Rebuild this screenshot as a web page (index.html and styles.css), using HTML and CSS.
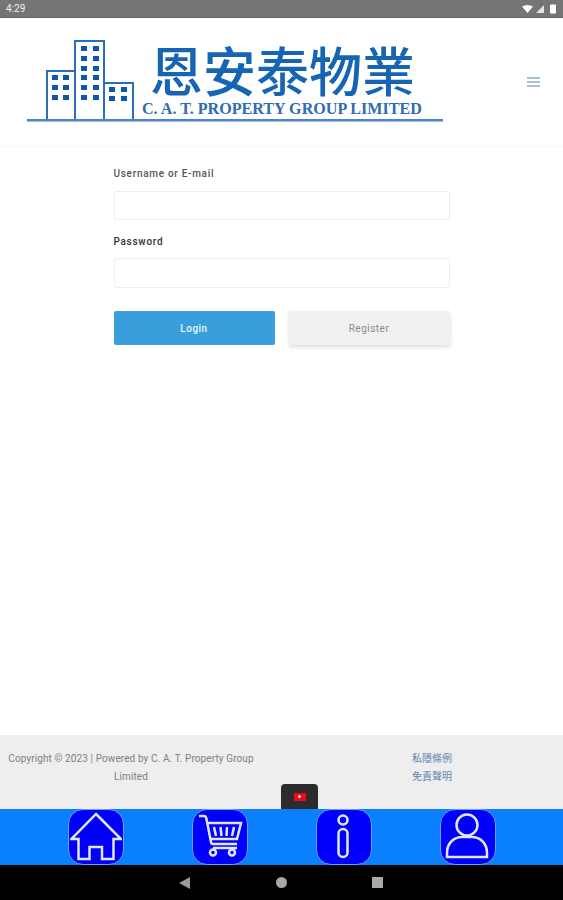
FILE: index.html
```html
<!DOCTYPE html>
<html lang="zh-Hant">
<head>
<meta charset="utf-8">
<title>C. A. T. Property Group</title>
<link rel="stylesheet" href="styles.css">
</head>
<body>
<div class="page">
  <div class="status">
    <span class="time">4:29</span>
    <svg class="status-icons" width="36" height="10" viewBox="0 0 36 10">
      <path d="M0 2.500 Q5.500 -0.500 11 2.500 L5.500 9 Z" fill="#fff"/>
      <path d="M22 1 V9 H14 Z" fill="#e4e4e4"/>
      <rect x="28" y="0.500" width="6" height="9" rx="1" fill="#fff"/>
    </svg>
  </div>
  <header class="header">
    <svg class="logo" width="450" height="128" viewBox="0 18 450 128">
      <g fill="none" stroke="#2a6fb8" stroke-width="2">
        <rect x="47" y="71" width="28" height="49"/>
        <rect x="75" y="41" width="29" height="79"/>
        <rect x="104" y="83" width="29" height="37"/>
      </g>
      <g fill="#0f56a6">
        <rect x="52" y="75" width="6" height="5"/><rect x="63" y="75" width="6" height="5"/>
        <rect x="52" y="85" width="6" height="5"/><rect x="63" y="85" width="6" height="5"/>
        <rect x="52" y="95" width="6" height="5"/><rect x="63" y="95" width="6" height="5"/>
        <rect x="81" y="46" width="6" height="5"/><rect x="93" y="46" width="6" height="5"/>
        <rect x="81" y="56" width="6" height="5"/><rect x="93" y="56" width="6" height="5"/>
        <rect x="81" y="66" width="6" height="5"/><rect x="93" y="66" width="6" height="5"/>
        <rect x="81" y="75" width="6" height="5"/><rect x="93" y="75" width="6" height="5"/>
        <rect x="81" y="85" width="6" height="5"/><rect x="93" y="85" width="6" height="5"/>
        <rect x="81" y="95" width="6" height="5"/><rect x="93" y="95" width="6" height="5"/>
        <rect x="109" y="87" width="6" height="5"/><rect x="121" y="87" width="6" height="5"/>
        <rect x="109" y="96" width="6" height="5"/><rect x="121" y="96" width="6" height="5"/>
      </g>
      <rect x="27" y="119" width="416" height="2.500" fill="#4f83c4"/>
      <text class="logo-cjk" x="150" y="92">恩安泰物業</text>
      <text class="logo-en" x="142" y="114">C. A. T. PROPERTY GROUP LIMITED</text>
    </svg>
    <button class="menu" aria-label="Menu"><span></span><span></span><span></span></button>
  </header>
  <main class="main">
    <form class="form">
      <label class="label label-user">Username or E-mail</label>
      <input class="input" type="text">
      <label class="label label-pass">Password</label>
      <input class="input input-pass" type="password">
      <div class="actions">
        <button class="btn btn-login" type="button">Login</button>
        <button class="btn btn-register" type="button">Register</button>
      </div>
    </form>
  </main>
  <footer class="footer">
    <p class="copy">Copyright © 2023 | Powered by C. A. T. Property Group Limited</p>
    <div class="links">
      <a>私隱條例</a>
      <a>免責聲明</a>
    </div>
    <div class="lang"><span class="flag"><i></i></span></div>
  </footer>
  <nav class="tabs">
    <a class="tab">
      <svg width="52" height="52" viewBox="0 0 52 52"><path d="M26 3 L51 28 H43.500 V48 H32 V36 H19.500 V48 H8.500 V28 H1.500 Z"/></svg>
    </a>
    <a class="tab">
      <svg width="52" height="52" viewBox="0 0 52 52">
        <path d="M5 5 H10 C11.500 5 12 6 12.300 7 L17 31 C17.300 32.500 18 33 19 33 H43"/>
        <path d="M14 12 H47 L43 28 H16.500"/>
        <path d="M20 16 L22 25 M26.500 16 L27.500 25 M33 16 L32.500 25 M40 16 L38 25"/>
        <path d="M19 37 H43"/>
        <circle cx="19" cy="41.500" r="3"/><circle cx="38" cy="41.500" r="3"/>
      </svg>
    </a>
    <a class="tab">
      <svg width="52" height="52" viewBox="0 0 52 52">
        <circle cx="25" cy="9" r="4.500"/>
        <rect x="20.500" y="18" width="9" height="28" rx="4.500"/>
      </svg>
    </a>
    <a class="tab">
      <svg width="52" height="52" viewBox="0 0 52 52">
        <circle cx="25" cy="14" r="10.500"/>
        <path d="M5 46 V42 C5 32 12 26 20 26 H30 C38 26 45 32 45 42 V46 Z"/>
      </svg>
    </a>
  </nav>
  <div class="sysnav">
    <span class="back"></span>
    <span class="home"></span>
    <span class="recent"></span>
  </div>
</div>
</body>
</html>
```

FILE: styles.css
```css
* { box-sizing: border-box; }
html, body { margin: 0; padding: 0; }
body { font-family: Roboto, "Noto Sans CJK TC", sans-serif; background: #fff; }
.page { display: flex; flex-direction: column; height: 900px; width: 563px; overflow: hidden; }

.status {
  flex: 0 0 18px;
  background: #757575;
  border-bottom: 1px solid #666;
  display: flex;
  justify-content: space-between;
  align-items: center;
  padding: 0 8px 0 6px;
}
.time { color: #f2f2f2; font-size: 10px; }
.status-icons { display: block; margin-right: -3px; }

.header {
  flex: 0 0 129px;
  display: flex;
  justify-content: space-between;
  align-items: flex-start;
  padding-right: 23px;
  border-bottom: 1px solid #f6f6f6;
}
.logo { display: block; }
.logo-cjk { font-family: "Noto Sans CJK TC", sans-serif; font-size: 53px; font-weight: 500; fill: #1565b4; }
.logo-en { font-family: "Liberation Serif", serif; font-size: 16.100px; font-weight: 700; fill: #2f6cb0; }
.menu {
  display: flex;
  flex-direction: column;
  gap: 2px;
  width: 13px;
  margin-top: 59px;
  padding: 0;
  border: 0;
  background: none;
}
.menu span { display: block; height: 2px; background: #a8bfdc; }

.main { flex: 1; padding-top: 20px; }
.form { width: 336px; margin: 0 auto; display: flex; flex-direction: column; }
.label { font-size: 10px; line-height: 14px; font-weight: 500; letter-spacing: .7px; }
.label-user { color: #555; margin-bottom: 10px; }
.label-pass { color: #333; margin-top: 15px; margin-bottom: 9px; }
.input {
  display: block;
  width: 100%;
  height: 29px;
  padding: 0 8px;
  background: #fff;
  border: 1px solid #eeeeee;
  border-radius: 2px;
  outline: 0;
}
.input-pass { height: 30px; }
.actions { display: flex; justify-content: space-between; margin-top: 23px; }
.btn {
  width: 161px;
  height: 34px;
  padding: 0;
  border: 0;
  border-radius: 2px;
  font-family: inherit;
  font-size: 10px;
  letter-spacing: .5px;
}
.btn-login { background: #379fdb; color: #eaf5fb; font-weight: 500; }
.btn-register { background: #f0f0f0; color: #8a8a8a; box-shadow: 0 2px 4px rgba(0, 0, 0, .14); }

.footer {
  position: relative;
  flex: 0 0 74px;
  display: flex;
  align-items: flex-start;
  padding-top: 14px;
  background: #eeeeee;
}
.copy {
  flex: 0 0 262px;
  margin: 1px 0 0;
  padding: 0 6px;
  color: #808080;
  font-size: 10px;
  line-height: 18px;
  letter-spacing: .1px;
  text-align: center;
}
.links { display: flex; flex-direction: column; margin-left: 150px; }
.links a { color: #5f86ad; font-size: 10px; line-height: 18px; font-family: "Noto Sans CJK TC", sans-serif; }
.lang {
  position: absolute;
  left: 281px;
  bottom: 0;
  width: 37px;
  height: 25px;
  background: #2c2c2c;
  border-radius: 4px 4px 0 0;
  display: flex;
  align-items: center;
  justify-content: center;
}
.flag {
  width: 12px;
  height: 8px;
  background: #f0071a;
  display: flex;
  align-items: center;
  justify-content: center;
}
.flag i { display: block; width: 3px; height: 3px; border-radius: 50%; background: #ffd5d5; }

.tabs { flex: 0 0 56px; background: #0a80ff; position: relative; display: flex; padding-left: 68px; gap: 68px; }
.tab {
  flex: 0 0 56px;
  height: 56px;
  background: #0000fb;
  border: 1px solid #5aa5ff;
  border-radius: 15px;
  display: flex;
  align-items: center;
  justify-content: center;
}
.tab svg { fill: none; stroke: #e3e6ff; stroke-width: 2.500; display: block; }

.sysnav {
  flex: 0 0 35px;
  background: #000;
  display: flex;
  align-items: center;
  padding-left: 179px;
}
.back {
  width: 0;
  height: 0;
  border-top: 6px solid transparent;
  border-bottom: 6px solid transparent;
  border-right: 11px solid #9a9a9a;
}
.home { width: 11px; height: 11px; margin-left: 86px; border-radius: 50%; background: #a8a8a8; }
.recent { width: 11px; height: 11px; margin-left: 85px; background: #a8a8a8; }
```
